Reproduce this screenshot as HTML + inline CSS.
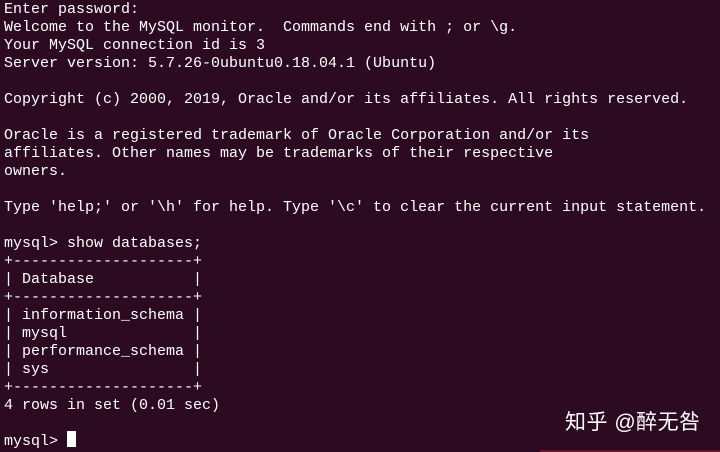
<!DOCTYPE html>
<html><head><meta charset="utf-8"><style>
html,body{margin:0;padding:0;}
body{width:720px;height:452px;background:#2c0a22;overflow:hidden;position:relative;}
pre{margin:0;position:absolute;left:4px;top:1px;font-family:"Liberation Mono","DejaVu Sans Mono",monospace;font-size:15px;line-height:18px;color:#ffffff;}
.cur{position:absolute;left:67px;top:431px;width:9px;height:16px;background:#fff;}
.wm{position:absolute;left:565px;top:406px;font-family:"Liberation Sans","Noto Sans CJK SC",sans-serif;font-size:21px;letter-spacing:0.5px;color:#fff;}
.bar{position:absolute;left:540px;bottom:0;width:180px;height:2px;background:#6a1428;}
</style></head><body>
<pre>Enter password:
Welcome to the MySQL monitor.  Commands end with ; or \g.
Your MySQL connection id is 3
Server version: 5.7.26-0ubuntu0.18.04.1 (Ubuntu)

Copyright (c) 2000, 2019, Oracle and/or its affiliates. All rights reserved.

Oracle is a registered trademark of Oracle Corporation and/or its
affiliates. Other names may be trademarks of their respective
owners.

Type 'help;' or '\h' for help. Type '\c' to clear the current input statement.

mysql&gt; show databases;
+--------------------+
| Database           |
+--------------------+
| information_schema |
| mysql              |
| performance_schema |
| sys                |
+--------------------+
4 rows in set (0.01 sec)

mysql&gt; </pre>
<div class="cur"></div>
<div class="wm">知乎 @醉无咎</div>
<div class="bar"></div>
</body></html>
